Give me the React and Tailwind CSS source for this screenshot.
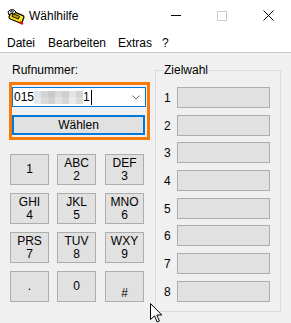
import React from "react";

function TitleIcon() {
  return (
    <svg width="18" height="17" viewBox="0 0 18 17" className="ml-[7px] mt-[1px]">
      <g transform="rotate(22 9 9)">
        <rect x="2.5" y="5" width="14" height="8" rx="2" fill="#ffe81a" stroke="#000" strokeWidth="1.2" />
        <rect x="5" y="7" width="7" height="3" fill="#b8a000" stroke="#000" strokeWidth="0.8" />
      </g>
      <path d="M1 4 C2 2 5 1 7 2 L9 4 L7 6 L4 5.5 L2 7 Z" fill="#e8e8e8" stroke="#000" strokeWidth="1" />
      <path d="M3 3.5 L6 4.5 M4 2.5 L7 3.5" stroke="#000" strokeWidth="0.8" />
      <path d="M12.5 14 L16 16" stroke="#e01010" strokeWidth="2.2" />
    </svg>
  );
}

function Key({ top, bottom, extra = "", hashLow = false }) {
  return (
    <div className={`w-[39px] h-[31px] border border-[#adadad] bg-[#e1e1e1] flex flex-col items-center justify-center leading-[13px] ${extra}`}>
      {hashLow ? <span className="h-[13px]" /> : null}
      {top ? <span>{top}</span> : null}
      {bottom ? <span>{bottom}</span> : null}
    </div>
  );
}

export default function App() {
  const rowsMt = ["mt-0", "mt-[7px]", "mt-[6px]", "mt-[7px]", "mt-[7px]", "mt-[6px]", "mt-[7px]", "mt-[7px]"];
  const blur = [
    ["#dfe4ea", "#d4d4d4", "#c9c9c9", "#d9d9d9", "#cfcfcf", "#e4e4e4", "#d2d2d2"],
    ["#e6e9ee", "#dadada", "#d0d0d0", "#e2e2e2", "#d6d6d6", "#ebebeb", "#dcdcdc"],
  ];
  return (
    <div className="w-[291px] h-[323px] bg-[#f0f0f0] relative overflow-hidden font-['Liberation_Sans',Arial,sans-serif] text-[12px] text-black">
      {/* Title bar */}
      <div className="h-[31px] bg-white flex items-center">
        <TitleIcon />
        <span className="ml-[4px] leading-[14px]">Wählhilfe</span>
        <div className="ml-auto flex h-full">
          <div className="w-[46px] h-full flex items-center justify-center">
            <div className="w-[10px] h-px bg-black" />
          </div>
          <div className="w-[46px] h-full flex items-center justify-center">
            <div className="w-[10px] h-[10px] border border-[#cccccc]" />
          </div>
          <div className="w-[46px] h-full flex items-center justify-center">
            <svg width="11" height="11" viewBox="0 0 11 11">
              <path d="M0.5 0.5 L10.5 10.5 M10.5 0.5 L0.5 10.5" stroke="#000" strokeWidth="1" />
            </svg>
          </div>
        </div>
      </div>
      {/* Menu bar */}
      <div className="h-[19px] bg-white flex items-center pt-[2px] border-b border-[#c8c8c8] box-content">
        <span className="ml-[7px] w-[41px] leading-[14px]">Datei</span>
        <span className="w-[70px] leading-[14px]">Bearbeiten</span>
        <span className="w-[44px] leading-[14px]">Extras</span>
        <span className="leading-[14px]">?</span>
      </div>

      {/* Content */}
      <div className="flex">
        {/* Left column */}
        <div className="pl-[9px] flex flex-col">
          <div className="ml-[3px] mt-[10px] leading-[14px]">Rufnummer:</div>
          <div className="mt-[5px] w-[141px] h-[58px] border-[3px] border-[#f7790b] flex flex-col">
            <div className="mt-[2px] w-[134px] h-[20px] border border-[#0078d7] bg-white flex items-center">
              <span className="pl-[1px] leading-[14px]">015</span>
              <div className="flex flex-col">
                {blur.map((row, i) => (
                  <div key={i} className="flex">
                    {row.map((c, j) => (
                      <div key={j} className="w-[7px] h-[6.5px]" style={{ background: c }} />
                    ))}
                  </div>
                ))}
              </div>
              <span className="leading-[14px]">1</span>
              <div className="ml-[1px] w-px h-[15px] bg-black" />
              <svg width="8" height="5" viewBox="0 0 8 5" className="ml-auto mr-[5px]">
                <path d="M0.5 0.5 L4 4 L7.5 0.5" stroke="#606060" strokeWidth="1" fill="none" />
              </svg>
            </div>
            <div className="mt-[8px] w-[133px] h-[20px] border-2 border-[#0078d7] bg-[#e1e1e1] flex items-center justify-center leading-[14px]">
              Wählen
            </div>
          </div>

          <div className="mt-[14px] ml-[1px] flex flex-col gap-[8px]">
            <div className="flex">
              <Key top="1" />
              <Key top="ABC" bottom="2" extra="ml-[8px]" />
              <Key top="DEF" bottom="3" extra="ml-[9px]" />
            </div>
            <div className="flex">
              <Key top="GHI" bottom="4" />
              <Key top="JKL" bottom="5" extra="ml-[8px]" />
              <Key top="MNO" bottom="6" extra="ml-[9px]" />
            </div>
            <div className="flex">
              <Key top="PRS" bottom="7" />
              <Key top="TUV" bottom="8" extra="ml-[8px]" />
              <Key top="WXY" bottom="9" extra="ml-[9px]" />
            </div>
            <div className="flex">
              <Key top="." />
              <Key top="0" extra="ml-[8px]" />
              <Key top="#" extra="ml-[9px]" hashLow />
            </div>
          </div>
        </div>

        {/* Zielwahl group */}
        <div className="ml-[5px] mt-[17px] w-[126px] h-[242px] border border-[#dcdcdc] relative pt-[16px] pl-[8px] flex flex-col">
          <span className="absolute left-[7px] top-[-8px] px-[1px] bg-[#f0f0f0] leading-[14px]">Zielwahl</span>
          {rowsMt.map((mt, i) => (
            <div key={i} className={`flex items-center ${mt}`}>
              <span className="w-[13px] leading-[14px]">{i + 1}</span>
              <div className="w-[93px] h-[21px] border border-[#adadad] bg-[#e1e1e1]" />
            </div>
          ))}
        </div>
      </div>

      {/* Mouse cursor */}
      <svg width="13" height="20" viewBox="0 0 13 20" className="absolute left-[150px] top-[303px]">
        <path d="M0.5 0.5 L0.5 16.5 L4.5 12.8 L7.2 19 L9.4 18 L6.8 12 L11.8 12 Z" fill="#fff" stroke="#000" strokeWidth="1" />
      </svg>
    </div>
  );
}
